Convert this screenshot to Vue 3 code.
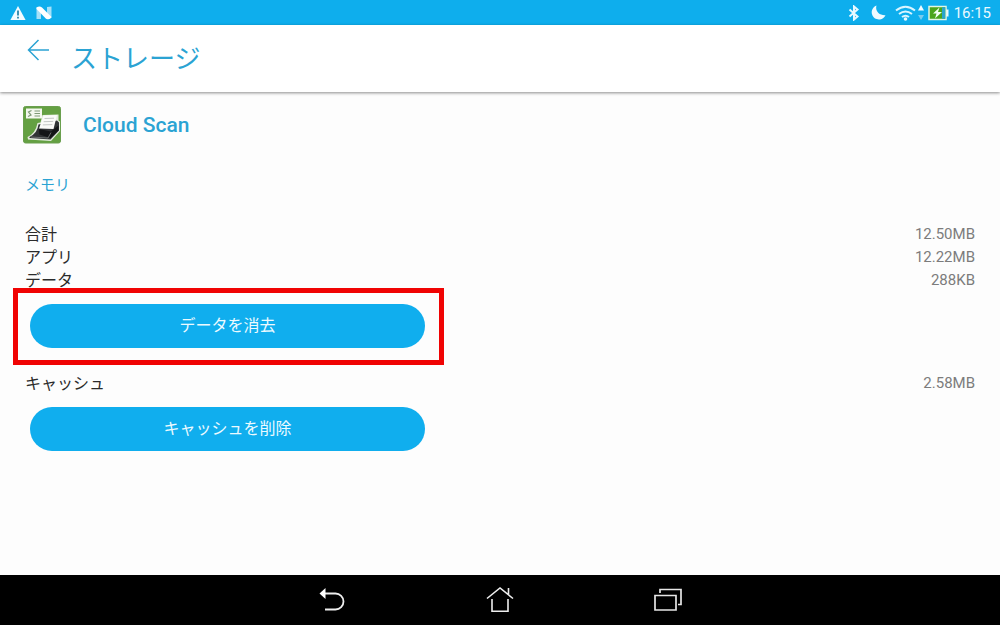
<script setup>
const usage = [
  { label: '合計', value: '12.50MB' },
  { label: 'アプリ', value: '12.22MB' },
  { label: 'データ', value: '288KB' },
]
</script>

<template>
  <div class="screen">
    <div class="status">
      <div class="status-group">
        <svg width="16" height="16" viewBox="0 0 16 16" aria-hidden="true">
          <path d="M8 1 15.6 15H.4Z" fill="#f2fbff" />
          <path d="M8 5.500v5M8 11.700v1.800" stroke="#2b86aa" stroke-width="1.800" />
        </svg>
        <svg width="16" height="14" viewBox="0 0 16 14" aria-hidden="true">
          <path d="M.5 1.500H5V13H.5ZM11 1l4.500-.5V12L11 11Z" fill="#a6e0f8" />
          <path d="M.5 1.500Q3.500-.3 6 1.500L15.500 11Q14 14.500 10 12.800L.5 3Z" fill="#fff" />
        </svg>
      </div>
      <div class="status-group right">
        <svg width="12" height="16" viewBox="0 0 12 16" fill="none" stroke="#e9f9ff" stroke-width="2" aria-hidden="true">
          <path d="m1.500 4.500 8 7L6 14.500v-13l3.500 3-8 7" />
        </svg>
        <svg class="moon" width="15" height="15" viewBox="0 0 15 15" aria-hidden="true">
          <path d="M5.500 .5C4 5.500 7.500 10.500 14.500 10.200A7.200 7.200 0 1 1 5.500 .5Z" fill="#effaff" />
        </svg>
        <svg class="wifi" width="21" height="16" viewBox="0 0 21 16" fill="none" stroke="#d9f5ff" stroke-width="2" aria-hidden="true">
          <path d="M1 5.500Q10.500-2 20 5.500M4 9q6.500-5 13 0M7 12q3.500-2.600 7 0" />
          <circle cx="10.500" cy="14" r="1.800" fill="#e9f9ff" stroke="none" />
        </svg>
        <svg width="6" height="16" viewBox="0 0 6 16" aria-hidden="true">
          <path d="M3 0 6 5.500H0Z" fill="#f2fbff" />
          <path d="M0 10h6l-3 5Z" fill="#79cbed" />
        </svg>
        <svg class="battery" width="21" height="16" viewBox="0 0 21 16" aria-hidden="true">
          <path d="M18 4.500h2.500v7H18Z" fill="#e9f9ff" />
          <path d="M1 1.500h17v13H1Z" fill="#4aa51c" stroke="#e3f6e4" stroke-width="1.500" />
          <path d="M14 2.200h3.300v11.600H14Z" fill="#2aa5cc" />
          <path d="M11.500 2.500 5 8.500h3.500L7 13.500l7-6.500h-4Z" fill="#effff0" />
        </svg>
        <time class="clock">16:15</time>
      </div>
    </div>

    <header class="bar">
      <button class="back" type="button" aria-label="戻る">
        <svg width="22" height="22" viewBox="0 0 22 22" fill="none" stroke="#2ba3d3" stroke-width="1.500" aria-hidden="true">
          <path d="M11.500 1 1.500 11l10 10M1.500 11H22" />
        </svg>
      </button>
      <h1 class="title">ストレージ</h1>
    </header>

    <main class="content">
      <div class="app">
        <svg width="38" height="38" viewBox="0 0 38 38" aria-hidden="true">
          <rect x=".5" y=".5" width="37" height="36.500" rx="2" fill="#64a042" stroke="#6a9f4e" />
          <path d="M3 2.500h16v10H3Z" fill="#f4f8ef" />
          <path d="M8.500 4.500 5.500 6l2.500 3-3 1.500M11.500 5H17M11.500 7.500H17M11.500 10H17" fill="none" stroke="#7f9a76" stroke-width="1.200" />
          <path d="M14.500 17 17.500 16.500l2-7.500 16-.5v6l1.500 1v9.500l-9 10L5 33.500 4.500 31q8-3.500 10-14Z" fill="#e4ebdf" />
          <path d="M15.500 18.500 34 14.500l2 2v8l-8.500 9-21-1.500v-1q8-4 9-12.500Z" fill="#303335" />
          <path d="m16 23 12 2.500 7.500-6v5l-8 7.500-11-3.500Z" fill="#131517" />
          <path d="m8 31 17 1 3-5.500" fill="none" stroke="#6c7070" />
          <path d="m20.500 9.500 13.500-.5-3.500 14-14.500-.5Z" fill="#fafbf9" />
          <path d="m21.500 12.500 9.500-.3m-10.300 3.500 9.500-.3m-10.400 3.500 9.500-.3" fill="none" stroke="#c4c8c6" />
        </svg>
        <h2 class="app-name">Cloud Scan</h2>
      </div>

      <h3 class="section">メモリ</h3>

      <dl class="rows">
        <div v-for="row in usage" :key="row.label" class="row">
          <dt>{{ row.label }}</dt>
          <dd>{{ row.value }}</dd>
        </div>
      </dl>
      <div class="action marked">
        <button class="pill" type="button">データを消去</button>
      </div>

      <dl class="rows cache">
        <div class="row">
          <dt>キャッシュ</dt>
          <dd>2.58MB</dd>
        </div>
      </dl>
      <div class="action">
        <button class="pill" type="button">キャッシュを削除</button>
      </div>
    </main>

    <nav class="nav">
      <button type="button" aria-label="戻る">
        <svg width="28" height="28" viewBox="0 0 28 28" aria-hidden="true">
          <path d="M5 7.500h12.500a8 8 0 0 1 0 16H7" fill="none" stroke="#eee" stroke-width="1.800" />
          <path d="M1.500 7.500 7.500 2v11Z" fill="#fff" />
        </svg>
      </button>
      <button type="button" aria-label="ホーム">
        <svg width="28" height="28" viewBox="0 0 28 28" fill="none" stroke="#eee" stroke-width="1.600" aria-hidden="true">
          <path d="M1 12.500 14 2l13 10.500M22.500 8.500V2M6 13v12.200h16V13" />
        </svg>
      </button>
      <button type="button" aria-label="履歴">
        <svg width="28" height="28" viewBox="0 0 28 28" fill="none" stroke="#e6e6e6" stroke-width="1.700" aria-hidden="true">
          <path d="M1 9.500h21v14.500H1ZM6 7V3.500h21v15h-3" />
        </svg>
      </button>
    </nav>
  </div>
</template>

<style>
body {
  margin: 0;
}
</style>

<style scoped>
.screen {
  display: flex;
  flex-direction: column;
  min-height: 100vh;
  background: #fdfdfd;
  color: #2b2b2b;
  font-family: Roboto, "Noto Sans CJK JP", sans-serif;
}

h1,
h2,
h3,
dl,
dd {
  margin: 0;
}

button {
  padding: 0;
  border: 0;
  background: none;
  font-family: inherit;
  cursor: pointer;
}

svg {
  display: block;
  flex: none;
}

.status {
  display: flex;
  justify-content: space-between;
  align-items: center;
  height: 25px;
  padding: 0 9px 0 10px;
  background: #0eaeed;
}

.status-group {
  display: flex;
  align-items: center;
  gap: 10px;
}

.right {
  gap: 0;
}

.moon {
  margin-left: 11px;
}

.wifi {
  margin: 0 2px 0 9px;
}

.battery {
  margin: 0 5px 0 4px;
}

.clock {
  color: #e9f9ff;
  font-size: 15px;
  line-height: 24px;
}

.bar {
  display: flex;
  align-items: center;
  height: 67px;
  padding: 0 27px;
  background: #fff;
  box-shadow: 0 1px 3px rgba(0, 0, 0, 0.45);
}

.back {
  margin-bottom: 18px;
}

.title {
  margin-left: 22px;
  color: #2ba3d3;
  font-size: 26px;
  font-weight: 400;
  line-height: 40px;
}

.content {
  flex: 1;
  padding: 14px 25px 24px;
}

.app {
  display: flex;
  align-items: center;
  gap: 22px;
  margin-left: -2px;
}

.app-name {
  color: #2ba3d3;
  font-size: 21px;
  font-weight: 500;
  line-height: 38px;
}

.section {
  margin-top: 29px;
  color: #2ba3d3;
  font-size: 15px;
  font-weight: 400;
  line-height: 24px;
}

.rows {
  margin-top: 26px;
}

.cache {
  margin-top: 24px;
}

.row {
  display: flex;
  justify-content: space-between;
  font-size: 16px;
  line-height: 23px;
}

.row dd {
  color: #7c7c7c;
  font-size: 15px;
}

.action {
  position: relative;
  width: 42%;
  margin: 12px 0 0 5px;
}

.pill {
  display: block;
  width: 99%;
  border-radius: 22px;
  background: #10aeee;
  color: #ecfaff;
  font-size: 16px;
  line-height: 44px;
}

.marked::after {
  content: "";
  position: absolute;
  inset: -16px -15px -17px -17px;
  border: 5px solid #f00303;
  pointer-events: none;
}

.nav {
  display: flex;
  justify-content: center;
  align-items: center;
  gap: 14%;
  height: 50px;
  background: #000;
}
</style>
